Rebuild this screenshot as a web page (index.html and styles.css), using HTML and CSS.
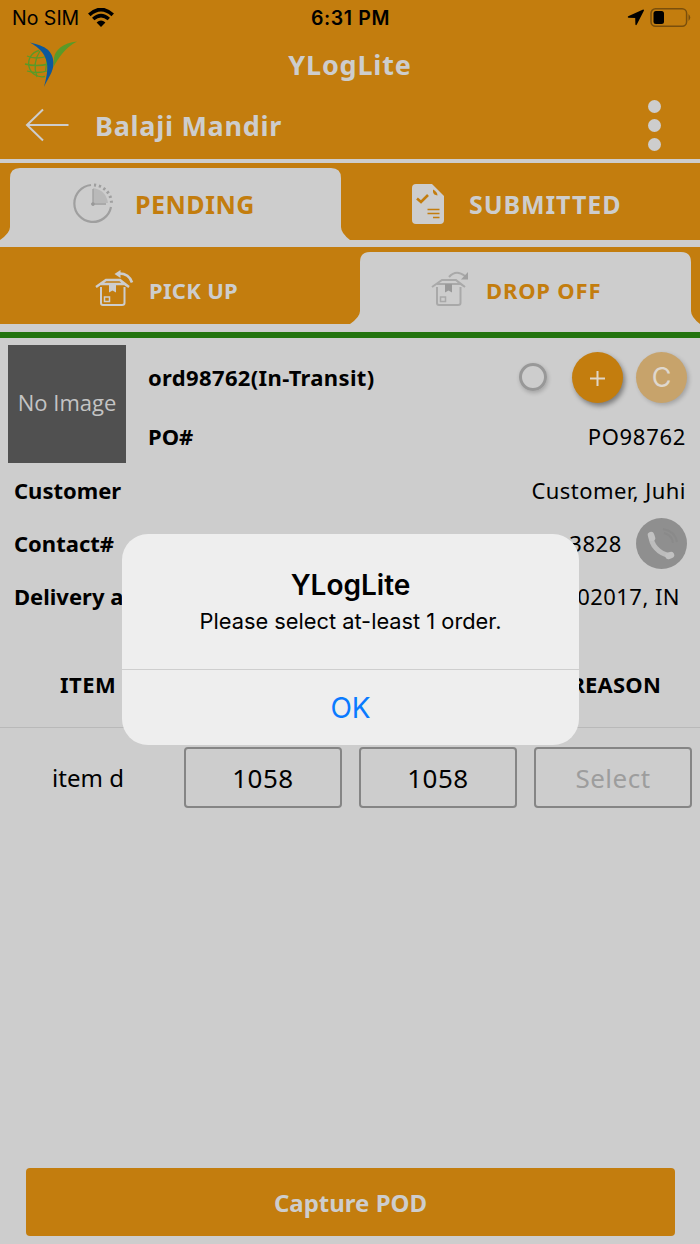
FILE: index.html
```html
<!DOCTYPE html>
<html lang="en">
<head>
    <meta charset="UTF-8">
    <meta name="viewport" content="width=device-width, initial-scale=1.0">
    <title>YLogLite</title>
    <link rel="stylesheet" href="styles.css">
</head>
<body>
    <header class="header">
        <div class="status-bar">
            <div class="carrier">
                <span class="no-sim">No SIM</span>
                <svg width="26" height="19" viewBox="0 0 26 19">
                    <path d="M1.300 6.800Q13 -3.600 24.700 6.800" fill="none" stroke="#000" stroke-width="3.800"/>
                    <path d="M5.200 11Q13 4.200 20.800 11" fill="none" stroke="#000" stroke-width="3.500"/>
                    <path d="M8.600 14.500Q13 10.500 17.400 14.500L13 19Z"/>
                </svg>
            </div>
            <span class="time">6:31 PM</span>
            <div class="battery">
                <svg width="64" height="20" viewBox="0 0 64 20">
                    <path d="M17 2.500Q17 1.300 15.600 1.700L1.200 8.300Q0 9.300 1.400 9.700L8.200 9.900L8.400 16.500Q8.900 17.800 9.800 16.600Z"/>
                    <rect x="24" y=".800" width="35.600" height="17.400" rx="4.500" fill="none" stroke="#7a4f0c" stroke-width="1.500"/>
                    <rect x="26.500" y="3" width="10.500" height="13" rx="2.500"/>
                    <path d="M61.500 6Q65 9.500 61.500 13Z" fill="#7a4f0c"/>
                </svg>
            </div>
        </div>
        <div class="title-bar">
            <svg class="logo" width="56" height="48" viewBox="0 0 56 48">
                <g fill="none" stroke="#5a9a28" stroke-width="1.300">
                    <path d="M16 9.500A13.300 13.300 0 1 0 22 35.500"/>
                    <path d="M17 10Q9 22 14 36M22 12Q25 18 22.500 30M4 15Q13 19 25 15M2 23Q13 26 26 23M4 30Q14 33 24 30"/>
                </g>
                <path d="M7 1.500C23 5 30 10 30.500 22C30.500 31 25 37 21 46C23 38 25 31 24 22C22 12 16 7 7 1.500Z" fill="#0d589c"/>
                <path d="M54 .500C40 2 32 9 31 17L30.500 26C36 16 42 7 54 .500Z" fill="#5a9a28"/>
            </svg>
            <h1>YLogLite</h1>
        </div>
        <div class="nav-bar">
            <svg class="back" width="44" height="34" viewBox="0 0 44 34" fill="none" stroke="#cdcdcd" stroke-width="2">
                <path d="M18 1.500L2 17L18 32.500M2 17H43.500"/>
            </svg>
            <h2>Balaji Mandir</h2>
            <div class="menu"><i></i><i></i><i></i></div>
        </div>
    </header>

    <div class="tabs">
        <div class="tab active">
            <svg class="clock" width="40" height="41" viewBox="0 0 40 41" fill="none" stroke="#9f9f9f">
                <path d="M20 20V5Q33 7 35 20Z" fill="#b9b9b9" stroke="none"/>
                <path d="M18 2A18.500 18.500 0 1 0 38 24" stroke-width="2.200"/>
                <path d="M21 2A18.500 18.500 0 0 1 38.500 20" stroke-width="3" stroke-dasharray="2.200 2.800"/>
                <path d="M20 6V21H33" stroke-width="1.300"/>
                <circle cx="20" cy="21" r="1.500" fill="#999"/>
            </svg>
            <span class="pending">PENDING</span>
        </div>
        <div class="tab">
            <svg class="doc" width="32" height="40" viewBox="0 0 32 40">
                <path d="M4 0H20L32 12V36Q32 40 28 40H4Q0 40 0 36V4Q0 0 4 0Z" fill="#cdcdcd"/>
                <path d="M21 5.500V8Q21.500 11 25.500 11.500Q25.500 8 21 5.500Z" fill="#c37d0e"/>
                <path d="M5 14.500L9 18L16 11" fill="none" stroke="#c37d0e" stroke-width="2.600"/>
                <path d="M15.500 25.500H27.500M15.500 29.500H27.500M21 33.500H27.500" stroke="#c37d0e" stroke-width="1.700"/>
            </svg>
            <span class="submitted">SUBMITTED</span>
        </div>
    </div>
    <div class="tabs">
        <div class="tab small">
            <svg class="box" width="39" height="37" viewBox="0 0 39 37" fill="none" stroke="#cdcdcd" stroke-width="2">
                <path d="M6 17V33Q6 35 8 35H27Q29.500 35 29.500 33V17"/>
                <path d="M6 14H29.500L25 10H11L1 17M29.500 14L34 17L25 10" stroke-width="2.400"/>
                <path d="M14 14H21V22.500L17.500 20.500L14 22.500Z" fill="#cdcdcd" stroke="none"/>
                <rect x="9.500" y="27" width="5" height="4.500" stroke-width="1.500"/>
                <path d="M23 3.500Q34 3 37 12.500" stroke-width="2.600"/>
                <path d="M19.500 4L25.500 0V8Z" fill="#cdcdcd" stroke="none"/>
            </svg>
            <span class="pickup">PICK UP</span>
        </div>
        <div class="tab small active">
            <svg class="box" width="39" height="37" viewBox="0 0 39 37" fill="none" stroke="#a9a9a9" stroke-width="2">
                <path d="M6 17V33Q6 35 8 35H27Q29.500 35 29.500 33V17"/>
                <path d="M6 14H29.500L25 10H11L1 17M29.500 14L34 17L25 10"/>
                <path d="M14 14H21V22.500L17.500 20.500L14 22.500Z" fill="#999" stroke="none"/>
                <rect x="9.500" y="27" width="5" height="4.500" stroke-width="1.500"/>
                <path d="M18 7Q25 -1 34 6"/>
                <path d="M37 2V9.500H30Z" fill="#a1a1a1" stroke="none"/>
            </svg>
            <span class="dropoff">DROP OFF</span>
        </div>
    </div>

    <main class="order">
        <div class="order-top">
            <div class="no-image">No Image</div>
            <div class="order-info">
                <div class="order-row">
                    <b class="order-id">ord98762(In-Transit)</b>
                    <div class="actions">
                        <span class="radio"></span>
                        <span class="circle">
                            <svg width="16" height="18" viewBox="0 0 16 18" stroke="#e0d6c8" stroke-width="2"><path d="M7.500 3V18M0 10.500H15"/></svg>
                        </span>
                        <span class="circle light">C</span>
                    </div>
                </div>
                <div class="order-row po">
                    <b>PO#</b>
                    <span class="po-number">PO98762</span>
                </div>
            </div>
        </div>
        <div class="detail">
            <b class="customer">Customer</b>
            <span class="name">Customer, Juhi</span>
        </div>
        <div class="detail contact">
            <b>Contact#</b>
            <span class="number">3828</span>
            <svg class="phone" width="51" height="51" viewBox="0 0 51 51">
                <circle cx="25.500" cy="25.500" r="25.500" fill="#8f8f8f"/>
                <path d="M28 15Q36 17 37 25M27 11Q39 13 41 24" fill="none" stroke="#8a8a8a" stroke-width="2"/>
                <path d="M15 18C15 26 22 36 34 37.500" fill="none" stroke="#bcbcbc" stroke-width="5" stroke-linecap="round"/>
                <path d="M15 17L16 20M32.500 38L35 37" fill="none" stroke="#c1c1c1" stroke-width="6.500" stroke-linecap="round"/>
            </svg>
        </div>
        <div class="detail address">
            <b>Delivery a</b>
            <span class="zip">302017, IN</span>
        </div>

        <div class="items-head">
            <b class="item-title">ITEM</b>
            <b class="reason-title">REASON</b>
        </div>
        <div class="items-row">
            <span class="item-name">item d</span>
            <span class="field">1058</span>
            <span class="field">1058</span>
            <span class="field select">Select</span>
        </div>
    </main>

    <button class="capture">Capture POD</button>

    <div class="alert">
        <div class="alert-text">
            <h3>YLogLite</h3>
            <p>Please select at-least 1 order.</p>
        </div>
        <div class="alert-ok"><span>OK</span></div>
    </div>
</body>
</html>
```
FILE: styles.css
```css
* {
    box-sizing: border-box;
}

body {
    margin: 0;
    height: 1244px;
    display: flex;
    flex-direction: column;
    background-color: #cdcdcd;
    color: #000;
    font-family: "Noto Sans", sans-serif;
    font-size: 22px;
    white-space: nowrap;
    overflow: hidden;
}

h1, h2, h3, p {
    margin: 0;
}

svg {
    display: block;
    flex-shrink: 0;
}

.header {
    height: 159px;
    background-color: #c37d0e;
    color: #cdcdcd;
}

.status-bar {
    display: grid;
    grid-template-columns: 1fr 1fr 1fr;
    align-items: center;
    height: 36px;
    padding: 0 9px 0 12px;
    color: #000;
    font-family: Inter, sans-serif;
    font-size: 19.5px;
}

.carrier {
    display: flex;
    align-items: center;
    gap: 9px;
}

.carrier svg {
    margin-top: -2px;
}

.time {
    text-align: center;
    font-weight: 600;
    font-size: 19.5px;
    letter-spacing: 0.6px;
    margin-left: -2px;
}

.battery {
    display: flex;
    justify-content: flex-end;
}

.title-bar {
    display: grid;
    grid-template-columns: 80px 1fr 80px;
    align-items: center;
    height: 56px;
}

.logo {
    margin: 1px 0 0 23px;
}

h1 {
    text-align: center;
    font-size: 27px;
    letter-spacing: 0.8px;
}

.nav-bar {
    display: flex;
    align-items: center;
    height: 67px;
    padding: 0 39px 0 25px;
}

.back {
    margin-top: -2px;
}

h2 {
    flex: 1;
    margin-left: 26px;
    font-size: 27px;
    letter-spacing: 0.7px;
}

.menu {
    display: flex;
    flex-direction: column;
    gap: 6px;
}

.menu i {
    width: 13px;
    height: 13px;
    border-radius: 50%;
    background-color: #cdcdcd;
}

.tabs {
    display: flex;
    height: 77px;
    background-color: #c37d0e;
    margin-top: 4px;
}

.tabs + .tabs {
    margin-top: 7px;
}

.tab {
    width: 350px;
    display: flex;
    align-items: center;
    padding-top: 4px;
    color: #cdcdcd;
    font-weight: bold;
    font-size: 25px;
}

.tab.small {
    font-size: 22px;
    padding-top: 9px;
}

.tab.active {
    background-color: #cdcdcd;
    color: #c37d0e;
    clip-path: path("M0 77Q10 70 10 64V15Q10 5 20 5H331Q341 5 341 15V64Q341 70 350 77Z");
}

.pending {
    letter-spacing: 0.5px;
}

.submitted {
    letter-spacing: 0.9px;
}

.pickup {
    letter-spacing: 0.3px;
}

.dropoff {
    letter-spacing: 0.8px;
}

.clock {
    margin-left: 73px;
    margin-right: 22px;
}

.doc {
    margin-left: 62px;
    margin-right: 25px;
}

.box {
    margin-left: 95px;
    margin-right: 15px;
    margin-top: -4px;
}

.active .box {
    margin-left: 81px;
    margin-right: 16px;
}

.order {
    flex: 1;
    margin-top: 8px;
    border-top: 6px solid #23740f;
    padding-top: 7px;
}

.order-top {
    display: flex;
    height: 119px;
    padding: 0 14px 0 8px;
}

.no-image {
    width: 118px;
    height: 118px;
    margin-right: 22px;
    background-color: #505050;
    color: #c4c4c4;
    font-family: "Open Sans", sans-serif;
    font-size: 22px;
    line-height: 114px;
    text-align: center;
}

.order-info {
    flex: 1;
}

.order-row {
    display: flex;
    align-items: center;
    justify-content: space-between;
    height: 64px;
}

.order-row.po {
    height: 54px;
}

.order-id {
    letter-spacing: 0.35px;
    margin-top: -1px;
}

.po-number {
    letter-spacing: 0.7px;
}

.actions {
    display: flex;
    align-items: center;
    margin-right: -1px;
}

.radio {
    width: 28px;
    height: 28px;
    margin-right: 25px;
    border: 3px solid #989898;
    border-radius: 50%;
    box-shadow: 1px 2px 4px rgba(0, 0, 0, 0.2);
}

.circle {
    display: flex;
    align-items: center;
    justify-content: center;
    width: 51px;
    height: 51px;
    border-radius: 50%;
    background-color: #c37d0e;
    box-shadow: 2px 3px 5px rgba(0, 0, 0, 0.4);
}

.circle.light {
    margin-left: 13px;
    background-color: #c7a36b;
    box-shadow: 2px 2px 4px rgba(0, 0, 0, 0.2);
    color: #dfd8ce;
    font-family: Inter, sans-serif;
    font-size: 27px;
}

.detail {
    display: flex;
    align-items: center;
    justify-content: space-between;
    height: 53px;
    padding: 0 14px 2px;
}

.name, .zip {
    letter-spacing: 0.45px;
}

.contact {
    padding-right: 13px;
}

.phone {
    margin-top: 2px;
}

.number {
    margin-left: auto;
    margin-right: 14px;
    letter-spacing: 0.6px;
}

.address {
    padding-right: 20px;
}

.items-head {
    display: flex;
    justify-content: space-between;
    height: 105px;
    padding: 46px 39px 0 60px;
    letter-spacing: 0.5px;
    border-bottom: 1px solid #b9b9b9;
}

.reason-title {
    letter-spacing: 0.2px;
}

.items-row {
    display: grid;
    grid-template-columns: 158px 158px 158px 158px;
    gap: 17px;
    padding: 19px 0 0 9px;
    line-height: 58px;
    text-align: center;
    font-size: 26px;
    letter-spacing: 0.5px;
}

.item-name {
    line-height: 62px;
    font-size: 24px;
    letter-spacing: 0;
}

.field {
    height: 61px;
    border: 2px solid #858585;
    border-radius: 4px;
}

.select {
    color: #9d9d9d;
}

.capture {
    height: 68px;
    margin: 0 25px 8px 26px;
    padding: 0;
    border: none;
    border-radius: 4px;
    background-color: #c37d0e;
    color: #cdcdcd;
    font-family: "Noto Sans", sans-serif;
    font-size: 24px;
    font-weight: bold;
}

/* alert popup over the page */
.alert {
    position: absolute;
    left: 122px;
    top: 534px;
    width: 457px;
    height: 211px;
    border-radius: 26px;
    background-color: #eee;
    font-family: Inter, sans-serif;
    text-align: center;
}

.alert-text {
    height: 136px;
    padding-top: 34px;
    border-bottom: 1px solid #cecece;
}

.alert h3 {
    font-size: 28px;
    font-weight: 600;
    line-height: 35px;
}

.alert p {
    font-size: 21.8px;
    line-height: 37px;
}

.alert-ok {
    line-height: 76px;
    color: #0a7aff;
    font-size: 28px;
}
```
